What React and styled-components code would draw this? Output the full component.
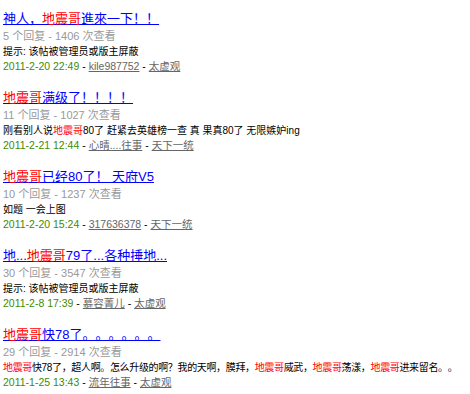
import React from 'react';
import styled, { createGlobalStyle } from 'styled-components';

const GlobalStyle = createGlobalStyle`
  body {
    margin: 0;
    background: #ffffff;
    font-family: Tahoma, "Liberation Sans", "Noto Sans CJK SC", sans-serif;
    text-spacing-trim: space-all;
  }
`;

const List = styled.div`
  padding: 9px 3px 0;
`;

const Item = styled.div`
  margin-bottom: 14px;
`;

const Title = styled.a`
  display: inline-block;
  font-size: 13px;
  line-height: 20px;
  color: #0000ff;
  text-decoration: underline;
  cursor: pointer;
`;

const Hot = styled.span`
  color: #ff0000;
`;

const Line = styled.div`
  font-size: ${(p) => p.$size || 11}px;
  line-height: 15px;
  color: ${(p) => p.$color || '#000000'};
  letter-spacing: ${(p) => (p.$tight ? '-0.35px' : 'normal')};
  white-space: nowrap;
`;

const DateText = styled.span`
  color: #3f8a00;
`;

const User = styled.a`
  color: #666666;
  text-decoration: underline;
  cursor: pointer;
`;

// 把“地震哥”标红
const highlight = (text) =>
  text.split('地震哥').map((part, i, arr) => (
    <React.Fragment key={i}>
      {part}
      {i < arr.length - 1 && <Hot>地震哥</Hot>}
    </React.Fragment>
  ));

const posts = [
  {
    title: '神人，地震哥進來一下！！',
    replies: 5,
    views: 1406,
    desc: '提示: 该帖被管理员或版主屏蔽',
    date: '2011-2-20 22:49',
    author: 'kile987752',
    last: '太虚观',
  },
  {
    title: '地震哥满级了！！！！',
    replies: 11,
    views: 1027,
    desc: '刚看别人说地震哥80了 赶紧去英雄榜一查 真 果真80了 无限嫉妒ing',
    date: '2011-2-21 12:44',
    author: '心晴....往事',
    last: '天下一统',
  },
  {
    title: '地震哥已经80了！ 天府V5',
    replies: 10,
    views: 1237,
    desc: '如题 一会上图',
    date: '2011-2-20 15:24',
    author: '317636378',
    last: '天下一统',
  },
  {
    title: '地...地震哥79了...各种捶地...',
    replies: 30,
    views: 3547,
    desc: '提示: 该帖被管理员或版主屏蔽',
    date: '2011-2-8 17:39',
    author: '慕容菁儿',
    last: '太虚观',
  },
  {
    title: '地震哥快78了。。。。。。',
    replies: 29,
    views: 2914,
    desc: '地震哥快78了，超人啊。怎么升级的啊？我的天啊，膜拜，地震哥威武，地震哥荡漾，地震哥进来留名。。',
    date: '2011-1-25 13:43',
    author: '流年往事',
    last: '太虚观',
  },
];

const App = () => (
  <>
    <GlobalStyle />
    <List>
      {posts.map((post) => (
        <Item key={post.date}>
          <Title>{highlight(post.title)}</Title>
          <Line $color="#999999">
            {post.replies} 个回复 - {post.views} 次查看
          </Line>
          <Line $size={10} $tight={post.desc.length > 40}>
            {highlight(post.desc)}
          </Line>
          <Line $size={10.5}>
            <DateText>{post.date}</DateText> - <User>{post.author}</User> -{' '}
            <User>{post.last}</User>
          </Line>
        </Item>
      ))}
    </List>
  </>
);

export default App;
